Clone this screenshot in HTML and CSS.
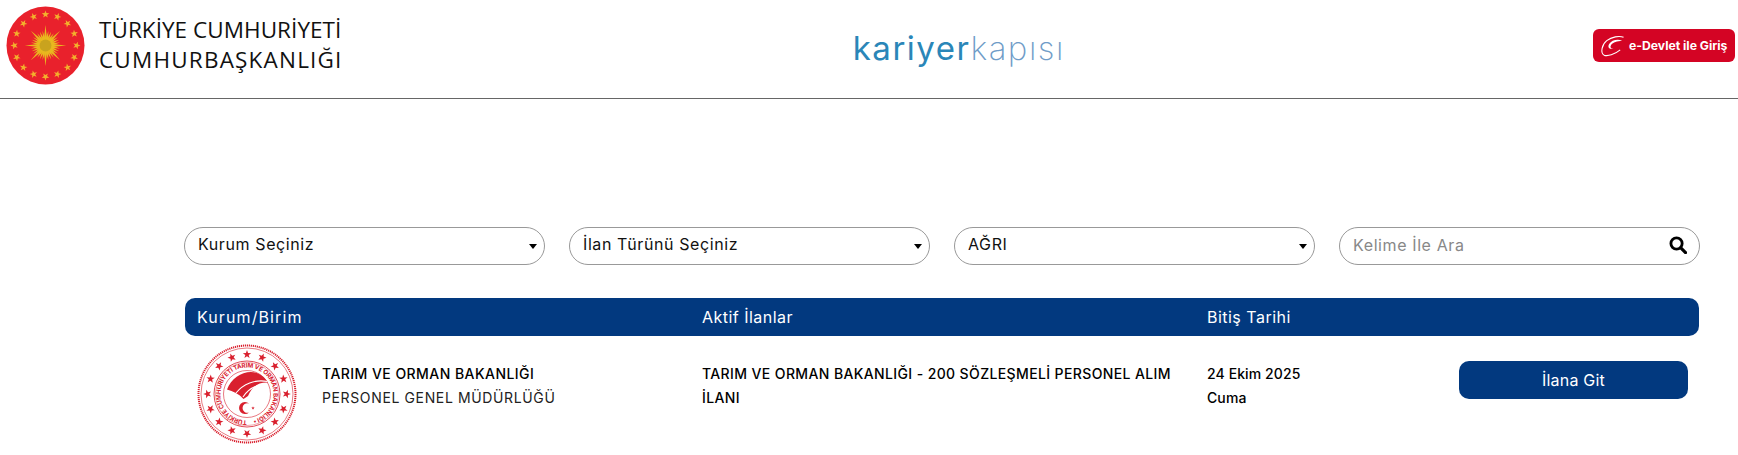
FILE: index.html
```html
<!DOCTYPE html>
<html lang="tr">
<head>
<meta charset="utf-8">
<title>Kariyer Kapısı</title>
<link rel="stylesheet" href="styles.css">
</head>
<body>
<svg class="defs" width="0" height="0" aria-hidden="true">
  <defs>
    <polygon id="star" points="0,-1 .235,-.324 .951,-.309 .38,.124 .588,.809 0,.4 -.588,.809 -.38,.124 -.951,-.309 -.235,-.324"/>
    <polygon id="ray" points="0,-21 1.800,-4 -1.800,-4"/>
    <polygon id="ray2" points="0,-15 1.800,-3 -1.800,-3"/>
    <g id="gstar"><use href="#star" transform="translate(0,-31.500) scale(4)"/></g>
    <g id="rstar"><use href="#star" transform="translate(0,-39.500) scale(4.400)"/></g>
  </defs>
</svg>
<header class="topbar">
  <div class="brand">
    <svg class="emblem" viewBox="0 0 80 80" aria-hidden="true">
      <circle cx="40" cy="40" r="39.500" fill="#e9212c"/>
      <g transform="translate(40 40)" fill="#f3b02c">
        <use href="#gstar"/><use href="#gstar" transform="rotate(22.500)"/><use href="#gstar" transform="rotate(45)"/><use href="#gstar" transform="rotate(67.500)"/><use href="#gstar" transform="rotate(90)"/><use href="#gstar" transform="rotate(112.500)"/><use href="#gstar" transform="rotate(135)"/><use href="#gstar" transform="rotate(157.500)"/><use href="#gstar" transform="rotate(180)"/><use href="#gstar" transform="rotate(202.500)"/><use href="#gstar" transform="rotate(225)"/><use href="#gstar" transform="rotate(247.500)"/><use href="#gstar" transform="rotate(270)"/><use href="#gstar" transform="rotate(292.500)"/><use href="#gstar" transform="rotate(315)"/><use href="#gstar" transform="rotate(337.500)"/>
      </g>
      <g transform="translate(40 40)" fill="#e9b81f">
        <use href="#ray"/><use href="#ray" transform="rotate(45)"/><use href="#ray" transform="rotate(90)"/><use href="#ray" transform="rotate(135)"/><use href="#ray" transform="rotate(180)"/><use href="#ray" transform="rotate(225)"/><use href="#ray" transform="rotate(270)"/><use href="#ray" transform="rotate(315)"/>
        <use href="#ray2" transform="rotate(22.500)"/><use href="#ray2" transform="rotate(67.500)"/><use href="#ray2" transform="rotate(112.500)"/><use href="#ray2" transform="rotate(157.500)"/><use href="#ray2" transform="rotate(202.500)"/><use href="#ray2" transform="rotate(247.500)"/><use href="#ray2" transform="rotate(292.500)"/><use href="#ray2" transform="rotate(337.500)"/>
        <use href="#ray2" transform="rotate(11.250)"/><use href="#ray2" transform="rotate(33.750)"/><use href="#ray2" transform="rotate(56.250)"/><use href="#ray2" transform="rotate(78.750)"/><use href="#ray2" transform="rotate(101.250)"/><use href="#ray2" transform="rotate(123.750)"/><use href="#ray2" transform="rotate(146.250)"/><use href="#ray2" transform="rotate(168.750)"/><use href="#ray2" transform="rotate(191.250)"/><use href="#ray2" transform="rotate(213.750)"/><use href="#ray2" transform="rotate(236.250)"/><use href="#ray2" transform="rotate(258.750)"/><use href="#ray2" transform="rotate(281.250)"/><use href="#ray2" transform="rotate(303.750)"/><use href="#ray2" transform="rotate(326.250)"/><use href="#ray2" transform="rotate(348.750)"/>
        <circle r="6" fill="#c9a31e"/>
      </g>
    </svg>
    <div class="brand-name"><div class="brand-l1">TÜRKİYE CUMHURİYETİ</div><div class="brand-l2">CUMHURBAŞKANLIĞI</div></div>
  </div>
  <div class="portal"><span class="portal-a">kariyer</span><span class="portal-b">kapısı</span></div>
  <a class="edevlet" href="#">
    <svg class="edevlet-mark" viewBox="0 0 26 22" aria-hidden="true">
      <path d="M4 20.500C.5 18 1.500 10 7 5.500 12 1.500 20 0 24.500 2" fill="none" stroke="#fff" stroke-width="1.100"/>
      <path d="M23 5.500C18 3.500 12 5 9.500 9 7.500 12.500 10 15 14 13.500 11.500 14 10 12.500 11.500 10 13.500 7 18 6 23 5.500Z" fill="#fff"/>
      <path d="M4 20.500C8 22 15 20 21 15" fill="none" stroke="#fff" stroke-width="1.100"/>
    </svg>
    <span>e-Devlet ile Giriş</span>
  </a>
</header>
<main class="content">
  <form class="filters">
    <div class="select-wrap"><select class="field" aria-label="Kurum"><option>Kurum Seçiniz</option></select></div>
    <div class="select-wrap"><select class="field" aria-label="İlan Türü"><option>İlan Türünü Seçiniz</option></select></div>
    <div class="select-wrap"><select class="field" aria-label="Şehir"><option>AĞRI</option></select></div>
    <div class="search-wrap">
      <input class="field search" type="text" placeholder="Kelime İle Ara">
      <svg class="search-icon" viewBox="0 0 16 16" aria-hidden="true"><circle cx="6.700" cy="6.700" r="5" fill="none" stroke="#000" stroke-width="2.500"/><path d="M10.500 10.500L14.700 14.700" stroke="#000" stroke-width="2.800" stroke-linecap="round"/></svg>
    </div>
  </form>
  <div class="thead">
    <div class="th-wide">Kurum/Birim</div>
    <div>Aktif İlanlar</div>
    <div>Bitiş Tarihi</div>
  </div>
  <div class="trow">
    <div class="org">
      <svg class="seal" viewBox="0 0 100 100" aria-hidden="true">
        <defs><path id="ringtext" d="M50 76.500A26.500 26.500 0 1 1 50.010 76.500"/></defs>
        <circle cx="50" cy="50" r="48.500" fill="none" stroke="#d9202e" stroke-width="2" stroke-dasharray="1.200 .8"/>
        <circle cx="50" cy="50" r="46" fill="none" stroke="#d9202e" stroke-width=".6"/>
        <circle cx="50" cy="50" r="33" fill="none" stroke="#d9202e" stroke-width=".8"/>
        <circle cx="50" cy="50" r="31.500" fill="none" stroke="#d9202e" stroke-width=".4"/>
        <circle cx="50" cy="50" r="23.500" fill="none" stroke="#d9202e" stroke-width=".6"/>
        <g transform="translate(50 50)" fill="#d9202e">
          <use href="#rstar"/><use href="#rstar" transform="rotate(22.500)"/><use href="#rstar" transform="rotate(45)"/><use href="#rstar" transform="rotate(67.500)"/><use href="#rstar" transform="rotate(90)"/><use href="#rstar" transform="rotate(112.500)"/><use href="#rstar" transform="rotate(135)"/><use href="#rstar" transform="rotate(157.500)"/><use href="#rstar" transform="rotate(180)"/><use href="#rstar" transform="rotate(202.500)"/><use href="#rstar" transform="rotate(225)"/><use href="#rstar" transform="rotate(247.500)"/><use href="#rstar" transform="rotate(270)"/><use href="#rstar" transform="rotate(292.500)"/><use href="#rstar" transform="rotate(315)"/><use href="#rstar" transform="rotate(337.500)"/>
        </g>
        <text class="seal-text"><textPath href="#ringtext" textLength="160">TÜRKİYE CUMHURİYETİ TARIM VE ORMAN BAKANLIĞI  •</textPath></text>
        <path d="M30 45.500C34 35 44 28 54 28 61 28 67 32 71 38.500 62 38 55 42 51 52L46.500 55C42 50 36 47 30 45.500Z" fill="#d9202e"/>
        <path d="M39 49C46 40 58 35 70.500 37.500M46 53C51 45 60 40.500 70 39.500" fill="none" stroke="#fff" stroke-width="1.100"/>
        <path d="M52 59.500A6 6 0 1 0 52 68.500 4.800 4.800 0 1 1 52 59.500Z" fill="#d9202e"/>
        <use href="#star" transform="translate(56 64) scale(1.800)" fill="#d9202e"/>
      </svg>
      <div class="org-text">
        <div class="org-name">TARIM VE ORMAN BAKANLIĞI</div>
        <div class="org-unit">PERSONEL GENEL MÜDÜRLÜĞÜ</div>
      </div>
    </div>
    <div class="posting">TARIM VE ORMAN BAKANLIĞI - 200 SÖZLEŞMELİ PERSONEL ALIM İLANI</div>
    <div class="date-cell">
      <div class="date">24 Ekim 2025<br>Cuma</div>
      <a class="go" href="#">İlana Git</a>
    </div>
  </div>
</main>
</body>
</html>
```
FILE: styles.css
```css
* { box-sizing: border-box; }
html, body { margin: 0; padding: 0; background: #fff; overflow: hidden; }
body { font-family: Inter, "Noto Sans", sans-serif; color: #000; }
.defs { position: absolute; }

.topbar {
  height: 99px;
  border-bottom: 1px solid #666;
  display: flex;
  justify-content: space-between;
  align-items: flex-start;
}
.brand { display: flex; align-items: flex-start; padding: 6px 0 0 6px; }
.emblem { width: 79px; height: 79px; flex: none; }
.brand-name {
  margin: 9px 0 0 14px;
  font-family: "Open Sans", sans-serif;
  font-size: 22.500px;
  line-height: 30px;
  color: #111;
  white-space: nowrap;
}
.brand-l1 { letter-spacing: .05px; }
.brand-l2 { letter-spacing: 1.200px; }
.portal {
  margin: 30px 18px 0 0;
  font-size: 33px;
  letter-spacing: 1.500px;
  line-height: 36px;
}
.portal-a { color: #2a86b8; font-weight: 400; }
.portal-b { color: #6f9cc8; font-weight: 200; }
.edevlet {
  margin: 29px 3px 0 0;
  width: 142px;
  height: 33px;
  display: flex;
  align-items: center;
  gap: 4px;
  padding-left: 7px;
  background: #d40424;
  border-radius: 6px;
  color: #fff;
  font-size: 12.200px;
  font-weight: 700;
  text-decoration: none;
  white-space: nowrap;
}
.edevlet-mark { width: 25px; height: 22px; flex: none; }

.content { padding: 128px 38px 0 184px; }
.filters { display: flex; gap: 24px; }
.select-wrap, .search-wrap { position: relative; flex: 1 1 0; }
.field {
  display: block;
  width: 100%;
  height: 38px;
  padding: 0 30px 4px 13px;
  border: 1px solid #999;
  border-radius: 19px;
  background: #fff;
  font: 400 16px Inter, sans-serif;
  letter-spacing: .6px;
  color: #111;
  appearance: none;
  outline: none;
}
.search { padding-bottom: 3px; }
.search::placeholder { color: #888; opacity: 1; }
.select-wrap::after {
  content: "";
  position: absolute;
  right: 8px;
  top: 17px;
  border-left: 4px solid transparent;
  border-right: 4px solid transparent;
  border-top: 5px solid #000;
}
.search-icon { position: absolute; right: 13px; top: 9px; width: 18px; height: 18px; }

.thead {
  margin: 33px 1px 0;
  height: 38px;
  padding: 0 12px;
  background: #02397f;
  border-radius: 10px;
  color: #fff;
  font-size: 16px;
  letter-spacing: .48px;
  display: grid;
  grid-template-columns: 505px 505px 1fr;
  align-items: center;
}
.th-wide { letter-spacing: 1.100px; }
.trow {
  margin: 0 1px;
  padding: 0 12px 0 0;
  display: grid;
  grid-template-columns: 505px 505px 1fr;
  align-items: start;
  font-size: 14px;
  letter-spacing: .45px;
}
.org { display: flex; align-items: flex-start; padding-left: 12px; }
.seal { width: 100px; height: 100px; flex: none; margin-top: 8px; }
.seal-text { font-size: 6.200px; font-weight: 700; fill: #d9202e; letter-spacing: 0; }
.org-text { margin: 26px 0 0 25px; line-height: 24px; }
.org-name { font-weight: 500; color: #000; }
.org-unit { color: #222; letter-spacing: .63px; }
.posting { font-weight: 500; line-height: 24px; padding: 26px 12px 0; color: #000; letter-spacing: .38px; }
.date-cell { display: flex; align-items: flex-start; justify-content: space-between; padding: 26px 0 0 12px; }
.date { font-weight: 500; line-height: 24px; color: #000; letter-spacing: .1px; }
.go {
  width: 229px;
  height: 38px;
  display: flex;
  align-items: center;
  justify-content: center;
  margin: -1px -1px 0 0;
  background: #02397f;
  border-radius: 10px;
  color: #fff;
  font-size: 16px;
  font-weight: 400;
  letter-spacing: .2px;
  text-decoration: none;
}
```
